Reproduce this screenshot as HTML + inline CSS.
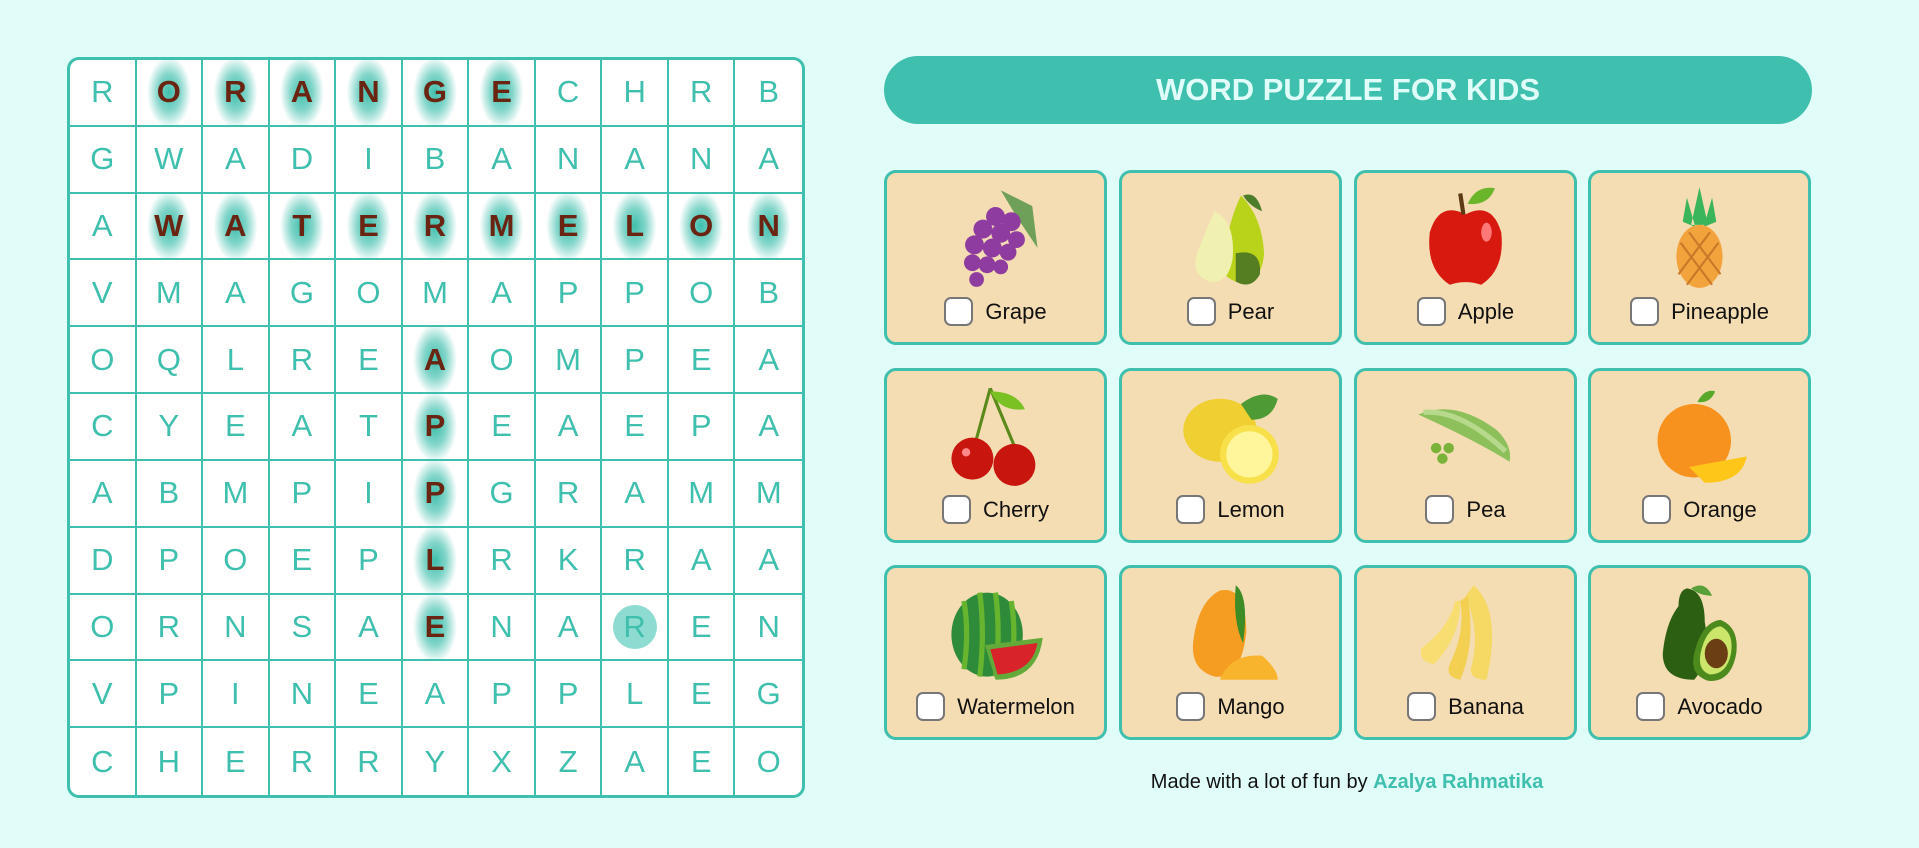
<!DOCTYPE html>
<html><head><meta charset="utf-8"><style>
*{box-sizing:border-box;margin:0;padding:0}
body{width:1919px;height:848px;background:#e1fdf9;font-family:"Liberation Sans",sans-serif;position:relative;overflow:hidden}
#grid{position:absolute;left:67px;top:57px;width:738px;height:741px;border:3px solid #3fbfad;border-radius:12px;background:#fff;overflow:hidden;display:grid;grid-template-columns:repeat(11,1fr);grid-template-rows:repeat(11,1fr)}
.c{border-right:2px solid #3fbfad;border-bottom:2px solid #3fbfad;display:flex;align-items:center;justify-content:center;color:#3fbfad;font-size:31px;font-weight:normal;position:relative}
.c:nth-child(11n){border-right:none}
.c:nth-child(n+111){border-bottom:none}
.h{color:#6a2412;font-weight:bold;background:radial-gradient(ellipse 22px 36px at center,#3fbfad 0%,rgba(63,191,173,.65) 50%,rgba(255,255,255,0) 100%)}
.o span{background:#8edcd1;width:44px;height:44px;border-radius:50%;display:flex;align-items:center;justify-content:center;color:#3fbfad}
#title{position:absolute;left:884px;top:56px;width:928px;height:68px;border-radius:34px;background:#3fbfad;color:#e1fdf9;font-weight:bold;font-size:31px;display:flex;align-items:center;justify-content:center}
.card{position:absolute;width:223px;height:175px;background:#f5ddb3;border:3px solid #3fbfad;border-radius:12px}
.card svg{position:absolute;left:56px;top:12px;width:105px;height:105px}
.lab{position:absolute;left:0;right:0;top:124px;display:flex;justify-content:center;align-items:center;gap:12px;font-size:22px;color:#111}
.cb{width:29px;height:29px;border:2px solid #777;border-radius:7px;background:#fff}
#foot{position:absolute;left:0;width:2694px;top:771px;text-align:center;font-size:20px;color:#111}
#foot b{color:#3fbfad}
</style></head><body>
<div id="grid">
<div class="c">R</div><div class="c h">O</div><div class="c h">R</div><div class="c h">A</div><div class="c h">N</div><div class="c h">G</div><div class="c h">E</div><div class="c">C</div><div class="c">H</div><div class="c">R</div><div class="c">B</div>
<div class="c">G</div><div class="c">W</div><div class="c">A</div><div class="c">D</div><div class="c">I</div><div class="c">B</div><div class="c">A</div><div class="c">N</div><div class="c">A</div><div class="c">N</div><div class="c">A</div>
<div class="c">A</div><div class="c h">W</div><div class="c h">A</div><div class="c h">T</div><div class="c h">E</div><div class="c h">R</div><div class="c h">M</div><div class="c h">E</div><div class="c h">L</div><div class="c h">O</div><div class="c h">N</div>
<div class="c">V</div><div class="c">M</div><div class="c">A</div><div class="c">G</div><div class="c">O</div><div class="c">M</div><div class="c">A</div><div class="c">P</div><div class="c">P</div><div class="c">O</div><div class="c">B</div>
<div class="c">O</div><div class="c">Q</div><div class="c">L</div><div class="c">R</div><div class="c">E</div><div class="c h">A</div><div class="c">O</div><div class="c">M</div><div class="c">P</div><div class="c">E</div><div class="c">A</div>
<div class="c">C</div><div class="c">Y</div><div class="c">E</div><div class="c">A</div><div class="c">T</div><div class="c h">P</div><div class="c">E</div><div class="c">A</div><div class="c">E</div><div class="c">P</div><div class="c">A</div>
<div class="c">A</div><div class="c">B</div><div class="c">M</div><div class="c">P</div><div class="c">I</div><div class="c h">P</div><div class="c">G</div><div class="c">R</div><div class="c">A</div><div class="c">M</div><div class="c">M</div>
<div class="c">D</div><div class="c">P</div><div class="c">O</div><div class="c">E</div><div class="c">P</div><div class="c h">L</div><div class="c">R</div><div class="c">K</div><div class="c">R</div><div class="c">A</div><div class="c">A</div>
<div class="c">O</div><div class="c">R</div><div class="c">N</div><div class="c">S</div><div class="c">A</div><div class="c h">E</div><div class="c">N</div><div class="c">A</div><div class="c o"><span>R</span></div><div class="c">E</div><div class="c">N</div>
<div class="c">V</div><div class="c">P</div><div class="c">I</div><div class="c">N</div><div class="c">E</div><div class="c">A</div><div class="c">P</div><div class="c">P</div><div class="c">L</div><div class="c">E</div><div class="c">G</div>
<div class="c">C</div><div class="c">H</div><div class="c">E</div><div class="c">R</div><div class="c">R</div><div class="c">Y</div><div class="c">X</div><div class="c">Z</div><div class="c">A</div><div class="c">E</div><div class="c">O</div>
</div>
<div id="title">WORD PUZZLE FOR KIDS</div>

<div class="card" style="left:884px;top:170px"><svg viewBox="0 0 100 100"><path d="M55 5 L85 20 L90 60 L70 30Z" fill="#6fa05a"/><g fill="#8e3ca0"><circle cx="50" cy="30" r="9"/><circle cx="65" cy="35" r="9"/><circle cx="38" cy="42" r="9"/><circle cx="55" cy="46" r="9"/><circle cx="70" cy="52" r="8"/><circle cx="30" cy="57" r="9"/><circle cx="47" cy="60" r="9"/><circle cx="62" cy="64" r="8"/><circle cx="28" cy="74" r="8"/><circle cx="42" cy="76" r="8"/><circle cx="55" cy="78" r="7"/><circle cx="32" cy="90" r="7"/></g></svg><div class="lab"><div class="cb"></div>Grape</div></div>
<div class="card" style="left:1119px;top:170px"><svg viewBox="0 0 100 100"><path d="M60 10 Q80 30 82 65 Q80 95 55 92 Q35 85 45 60 Q50 30 60 10Z" fill="#b9d21a"/><path d="M35 25 Q55 35 52 70 Q48 95 30 92 Q10 85 20 60 Q28 40 35 25Z" fill="#f0f0b0"/><path d="M55 65 Q80 60 78 85 Q70 100 55 92Z" fill="#557d22"/><path d="M62 10 Q75 5 80 25 Q68 20 62 10Z" fill="#4b7d2a"/></svg><div class="lab"><div class="cb"></div>Pear</div></div>
<div class="card" style="left:1354px;top:170px"><svg viewBox="0 0 100 100"><path d="M50 28 Q25 15 16 45 Q12 80 35 95 Q50 90 65 95 Q88 80 84 45 Q75 15 50 28Z" fill="#d8190f"/><path d="M48 28 L45 8" stroke="#5c3a14" stroke-width="4"/><path d="M52 18 Q60 0 78 3 Q72 20 52 18Z" fill="#6ab52a"/><ellipse cx="70" cy="45" rx="5" ry="9" fill="#f77"/></svg><div class="lab"><div class="cb"></div>Apple</div></div>
<div class="card" style="left:1588px;top:170px"><svg viewBox="0 0 100 100"><path d="M50 2 L42 38 L58 38Z M38 12 L46 40 L34 35Z M62 12 L54 40 L66 35Z" fill="#3ab55c"/><ellipse cx="50" cy="68" rx="22" ry="30" fill="#f3a33c"/><path d="M32 55 L62 95 M40 45 L70 85 M68 55 L38 95 M60 45 L30 85" stroke="#c9782a" stroke-width="2"/></svg><div class="lab"><div class="cb"></div>Pineapple</div></div>

<div class="card" style="left:884px;top:368px"><svg viewBox="0 0 100 100"><path d="M45 5 L30 60 M45 5 L70 65" stroke="#5a8a1a" stroke-width="3" fill="none"/><path d="M45 8 Q70 8 78 25 Q55 28 45 8Z" fill="#7ac224"/><circle cx="28" cy="72" r="20" fill="#c8150e"/><circle cx="68" cy="78" r="20" fill="#c8150e"/><circle cx="22" cy="66" r="4" fill="#f88"/></svg><div class="lab"><div class="cb"></div>Cherry</div></div>
<div class="card" style="left:1119px;top:368px"><svg viewBox="0 0 100 100"><ellipse cx="40" cy="45" rx="35" ry="30" fill="#f0cf33"/><path d="M60 20 Q80 5 95 15 Q90 35 70 35Z" fill="#4e9a34"/><circle cx="68" cy="68" r="28" fill="#f7e04a"/><circle cx="68" cy="68" r="22" fill="#fff59a"/></svg><div class="lab"><div class="cb"></div>Lemon</div></div>
<div class="card" style="left:1354px;top:368px"><svg viewBox="0 0 100 100"><path d="M5 30 Q40 15 80 45 Q95 60 92 75 Q60 55 5 30Z" fill="#8dc05a"/><path d="M10 28 Q45 25 88 65" stroke="#b6d98c" stroke-width="5" fill="none"/><circle cx="22" cy="62" r="5" fill="#7ab23a"/><circle cx="34" cy="62" r="5" fill="#7ab23a"/><circle cx="28" cy="72" r="5" fill="#7ab23a"/></svg><div class="lab"><div class="cb"></div>Pea</div></div>
<div class="card" style="left:1588px;top:368px"><svg viewBox="0 0 100 100"><path d="M48 18 Q55 5 65 8 Q60 20 48 18Z" fill="#5aa82a"/><circle cx="45" cy="55" r="35" fill="#f7921e"/><path d="M40 80 L95 70 Q90 95 55 95Z" fill="#ffc61a"/></svg><div class="lab"><div class="cb"></div>Orange</div></div>

<div class="card" style="left:884px;top:565px"><svg viewBox="0 0 100 100"><ellipse cx="42" cy="52" rx="34" ry="40" fill="#2e8b3a"/><path d="M20 20 Q25 50 20 85 M35 12 Q40 50 35 92 M50 12 Q55 50 50 92 M65 20 Q70 50 65 85" stroke="#67b52e" stroke-width="5" fill="none"/><path d="M40 62 L95 55 Q90 95 50 95Z" fill="#64aa3a"/><path d="M45 66 L90 60 Q85 88 52 90Z" fill="#d8232a"/></svg><div class="lab"><div class="cb"></div>Watermelon</div></div>
<div class="card" style="left:1119px;top:565px"><svg viewBox="0 0 100 100"><path d="M40 10 Q65 5 65 50 Q60 95 35 92 Q10 85 15 55 Q20 20 40 10Z" fill="#f49d21"/><path d="M55 5 Q68 15 62 60 Q52 40 55 5Z" fill="#3e8c25"/><path d="M40 95 Q50 70 80 72 Q95 85 95 95Z" fill="#f7b42c"/></svg><div class="lab"><div class="cb"></div>Mango</div></div>
<div class="card" style="left:1354px;top:565px"><svg viewBox="0 0 100 100"><path d="M58 5 Q85 30 70 95 Q55 95 55 85 Q65 50 50 15Z" fill="#f6d865"/><path d="M52 15 Q60 60 45 95 Q30 92 35 80 Q50 50 45 20Z" fill="#f3cf52"/><path d="M45 20 Q45 55 20 80 Q5 78 8 65 Q35 45 40 20Z" fill="#f8dd70"/></svg><div class="lab"><div class="cb"></div>Banana</div></div>
<div class="card" style="left:1588px;top:565px"><svg viewBox="0 0 100 100"><path d="M38 8 Q55 10 55 40 Q62 75 45 95 Q15 95 15 70 Q18 40 30 25 Q30 10 38 8Z" fill="#2c5f12"/><path d="M42 8 Q55 0 62 15 Q50 15 42 8Z" fill="#5aa03a"/><path d="M70 38 Q88 45 85 70 Q80 98 58 96 Q40 90 45 70 Q52 40 70 38Z" fill="#4d8a1e"/><path d="M70 44 Q83 50 80 70 Q76 90 60 90 Q48 86 51 70 Q56 46 70 44Z" fill="#cbe66a"/><ellipse cx="66" cy="70" rx="11" ry="14" fill="#6b3e14"/></svg><div class="lab"><div class="cb"></div>Avocado</div></div>

<div id="foot">Made with a lot of fun by <b>Azalya Rahmatika</b></div>
</body></html>
